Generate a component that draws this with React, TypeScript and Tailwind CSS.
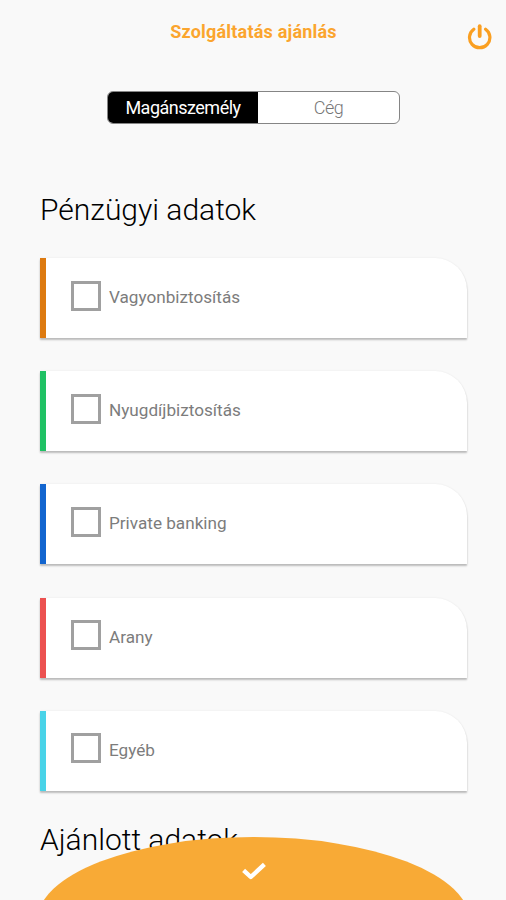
import { useState } from "react";

const services = [
  { label: "Vagyonbiztosítás", bar: "bg-[#dd7a10]" },
  { label: "Nyugdíjbiztosítás", bar: "bg-[#1fc164]" },
  { label: "Private banking", bar: "bg-[#1265cf]" },
  { label: "Arany", bar: "bg-[#ec5150]" },
  { label: "Egyéb", bar: "bg-[#49d3e8]" },
];

function PowerIcon() {
  return (
    <svg width="26" height="26" viewBox="0 0 26 26" fill="none" stroke="#fa9f21" strokeWidth="3.2" strokeLinecap="round">
      <path d="M7.8 5.2A10.2 10.2 0 1 0 19.6 5.2" />
      <path d="M13.7 2.2V12" strokeWidth="3.8" />
    </svg>
  );
}

function ServiceCard({ label, bar }: { label: string; bar: string }) {
  const [checked, setChecked] = useState(false);
  return (
    <label className="flex h-20 overflow-hidden rounded-tr-[32px] bg-white shadow-[0_2px_2px_rgba(0,0,0,0.24),0_0_2px_rgba(0,0,0,0.08)]">
      <span className={`w-1.5 shrink-0 ${bar}`} />
      <span className="flex items-center pb-[5px] pl-[25px]">
        <input
          type="checkbox"
          checked={checked}
          onChange={() => setChecked(!checked)}
          className="size-[30px] appearance-none border-[3px] border-[#a0a0a0] bg-white checked:bg-[#f8aa36]"
        />
        <span className="pl-2 pt-[3px] text-[17.15px] leading-6 text-[#7c7c7c]">{label}</span>
      </span>
    </label>
  );
}

export default function App() {
  return (
    <div className="relative h-[900px] w-full overflow-hidden bg-[#f9f9f9] font-['Roboto',sans-serif]">
      <header className="grid h-[91px] grid-cols-[40px_1fr_40px] items-start">
        <span />
        <h1 className="pl-px pt-5 text-center text-[18px] font-bold leading-6 tracking-[0.2px] text-[#fba52e]">Szolgáltatás ajánlás</h1>
        <button className="pt-6" aria-label="Kilépés">
          <PowerIcon />
        </button>
      </header>

      <div className="ml-[107px] flex h-[33px] w-[293px] overflow-hidden rounded-[6px] border border-[#858585] bg-white text-[18px] tracking-[-0.5px]">
        <button className="w-[150px] bg-black text-white">Magánszemély</button>
        <button className="flex-1 font-light text-[#777777]">Cég</button>
      </div>

      <main className="pl-10 pr-[39px]">
        <h2 className="pt-[66px] text-[30px] font-light leading-10 text-black">Pénzügyi adatok</h2>
        <div className="mt-[28px] flex flex-col gap-[33.18px]">
          {services.map((s) => (
            <ServiceCard key={s.label} label={s.label} bar={s.bar} />
          ))}
        </div>
        <h2 className="pt-[29px] text-[30px] font-light leading-10 text-black">Ajánlott adatok</h2>
      </main>

      <button
        aria-label="Mentés"
        className="absolute left-[37px] top-[837px] flex h-[168px] w-[433px] justify-center rounded-[50%] bg-[#f8aa36] pt-[24px]"
      >
        <svg width="26" height="20" viewBox="0 0 26 20" fill="none" stroke="white" strokeWidth="4.4" strokeLinecap="butt" strokeLinejoin="round">
          <path d="M2.6 9.4L9.8 16L23.4 3.4" />
        </svg>
      </button>
    </div>
  );
}
